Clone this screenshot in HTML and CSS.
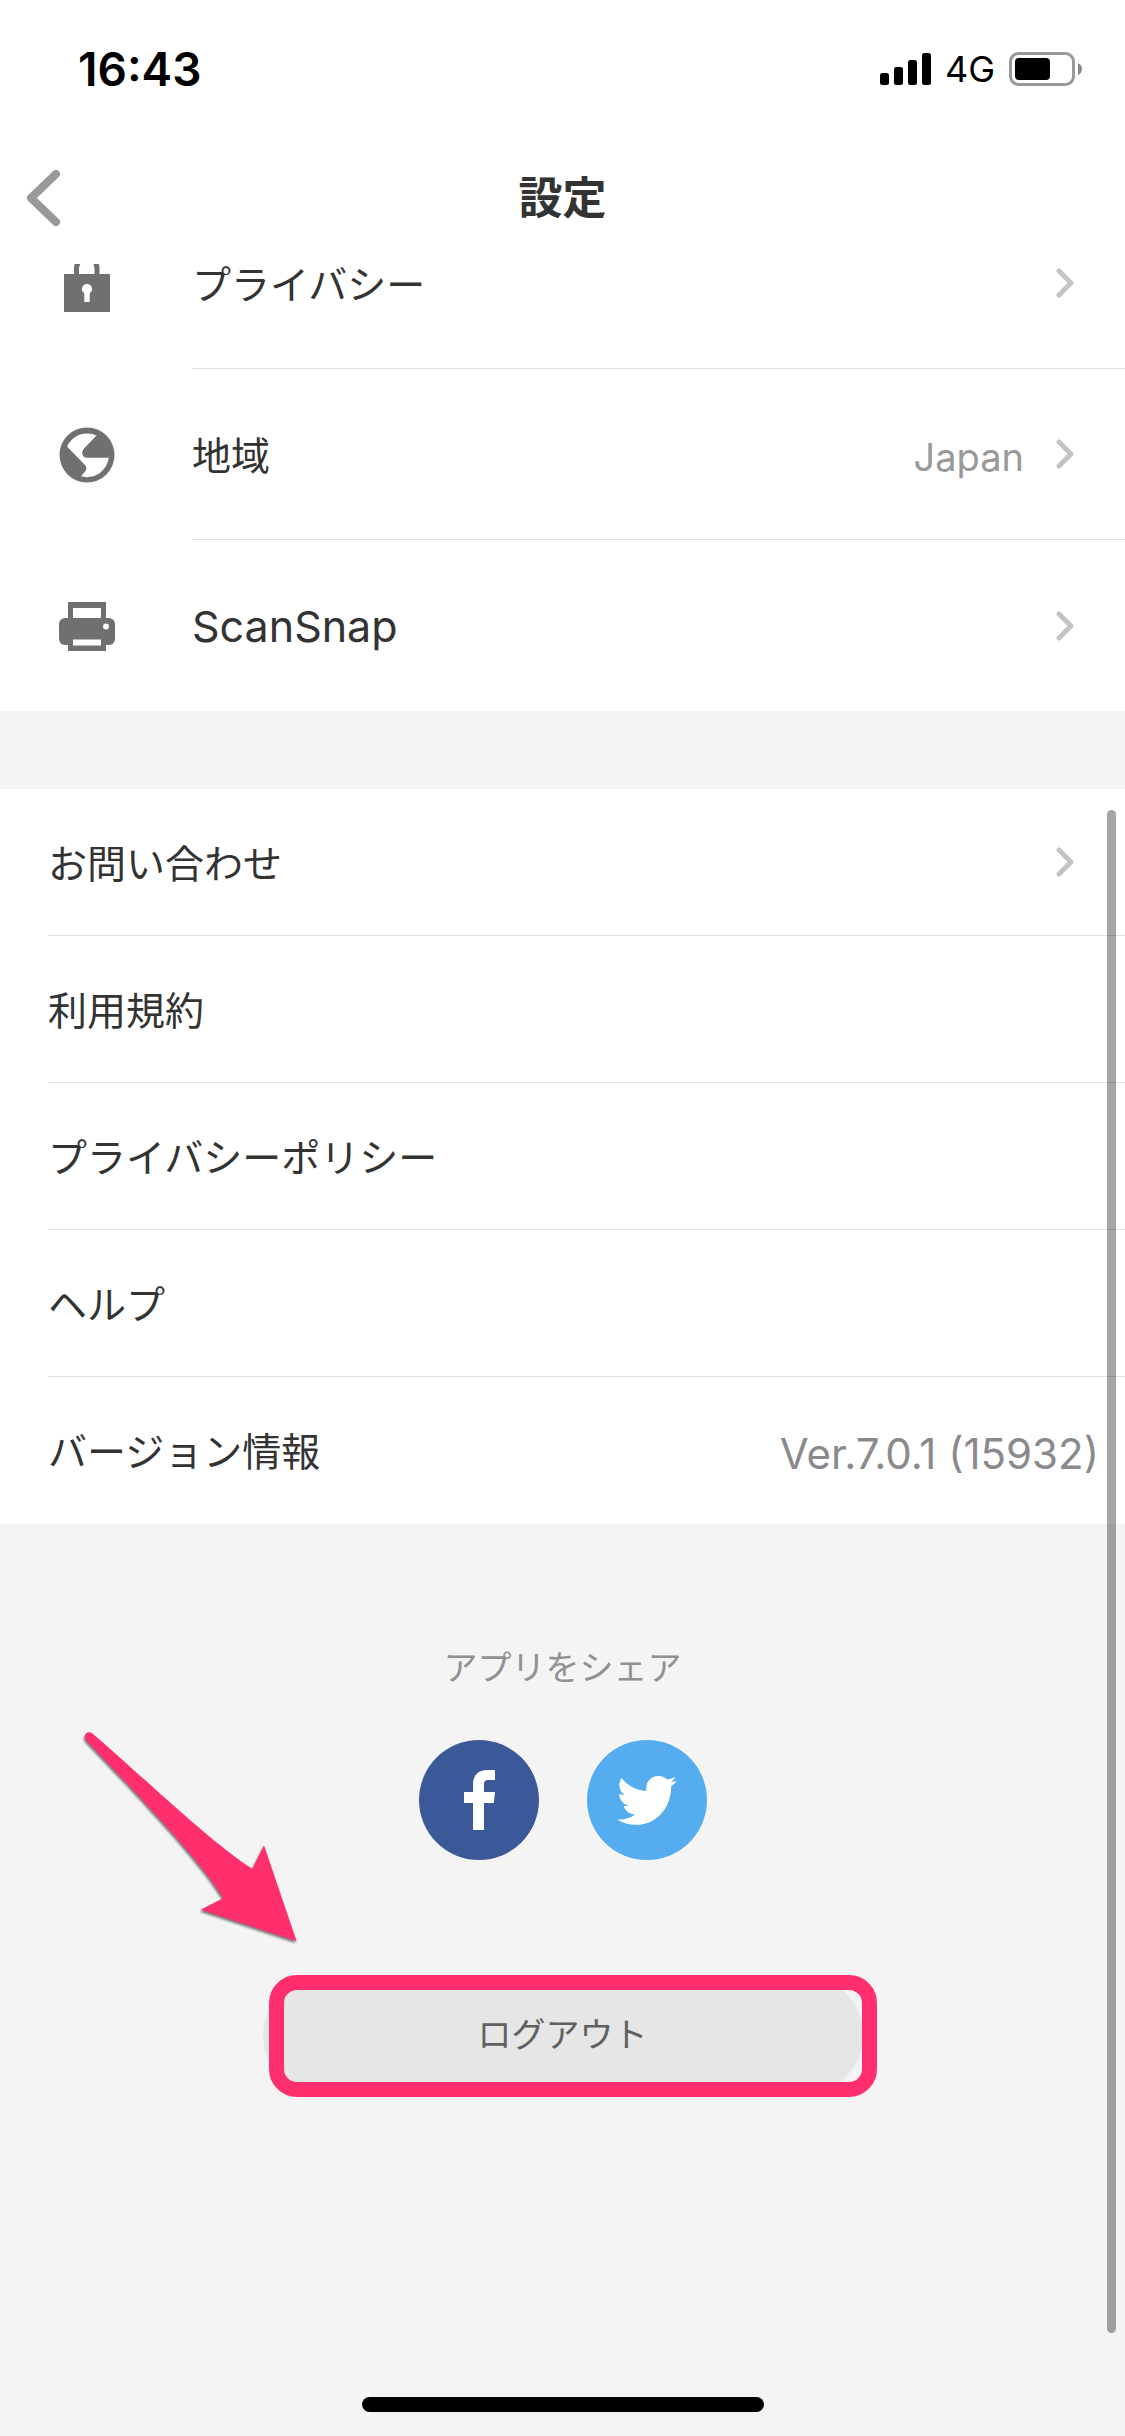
FILE: index.html
```html
<!DOCTYPE html>
<html lang="ja">
<head>
    <meta charset="UTF-8">
    <meta name="viewport" content="width=device-width, initial-scale=1.0">
    <title>設定</title>
    <link rel="stylesheet" href="styles.css">
</head>
<body>

<header class="top">
    <div class="status-bar">
        <span class="time">16:43</span>
        <div class="status-icons">
            <svg class="signal" viewBox="0 0 51 33" aria-hidden="true">
                <rect x="0" y="20" width="9" height="12" rx="2.5"/>
                <rect x="14" y="14" width="9" height="18" rx="2.5"/>
                <rect x="28" y="7" width="9" height="25" rx="2.5"/>
                <rect x="42" y="0" width="9" height="32" rx="2.5"/>
            </svg>
            <span class="network">4G</span>
            <svg class="battery" viewBox="0 0 74 34" aria-hidden="true">
                <rect x="1.5" y="1.5" width="63" height="31" rx="8" fill="none" stroke="#999" stroke-width="3"/>
                <rect x="6" y="6" width="35" height="22" rx="4"/>
                <path d="M69 11q4 2 4 6t-4 6z" fill="#888"/>
            </svg>
        </div>
    </div>
    <div class="nav-bar">
        <button class="back" type="button" aria-label="戻る">
            <svg viewBox="0 0 33 57" aria-hidden="true"><path d="M29 4L4 28L29 52"/></svg>
        </button>
        <h1>設定</h1>
    </div>
</header>

<main>
    <nav class="list icon-list">
        <a class="row" href="#privacy">
            <svg class="icon" viewBox="0 0 66 66" aria-hidden="true">
                <path d="M22.500 24V17C22.500 12 27 7 33 7S43 12 43 17v7" fill="none" stroke="#707070" stroke-width="5"/>
                <path d="M10 23h46v38H10z"/>
                <path d="M33 33a5 5 0 0 0-2.700 9.200V51h5.400v-8.800A5 5 0 0 0 33 33z" fill="#fff"/>
            </svg>
            <span class="row-body"><span class="label">プライバシー</span>
                <svg class="chevron" viewBox="0 0 18 30" aria-hidden="true"><path d="M3 3L15 15L3 27"/></svg></span>
        </a>
        <a class="row" href="#region">
            <svg class="icon" viewBox="0 0 66 66" aria-hidden="true">
                <circle cx="33" cy="33" r="27.500"/>
                <path d="M13 24.500A22 22 0 0 1 42.500 13.500L30.500 26Q27.500 29 28.500 32.500Q29.500 35.700 33 35.700H54.800A22 22 0 0 1 27 54.300L31.500 49Q33.500 46 31 43z" fill="#fff"/>
            </svg>
            <span class="row-body"><span class="label">地域</span><span class="value">Japan</span>
                <svg class="chevron" viewBox="0 0 18 30" aria-hidden="true"><path d="M3 3L15 15L3 27"/></svg></span>
        </a>
        <a class="row" href="#scansnap">
            <svg class="icon" viewBox="0 0 66 66" aria-hidden="true">
                <path d="M14 9h38v16H14zM14 45h38v13H14z"/>
                <rect x="5" y="25" width="56" height="27" rx="6"/>
                <path d="M19 15h28v10H19zM19 46.500h28v6H19z" fill="#fff"/>
                <circle cx="52" cy="33.500" r="3" fill="#fff"/>
            </svg>
            <span class="row-body"><span class="label label-en">ScanSnap</span>
                <svg class="chevron" viewBox="0 0 18 30" aria-hidden="true"><path d="M3 3L15 15L3 27"/></svg></span>
        </a>
    </nav>

    <nav class="list info-list">
        <a class="row" href="#contact"><span class="row-body"><span class="label">お問い合わせ</span>
            <svg class="chevron" viewBox="0 0 18 30" aria-hidden="true"><path d="M3 3L15 15L3 27"/></svg></span></a>
        <a class="row" href="#terms"><span class="row-body"><span class="label">利用規約</span></span></a>
        <a class="row" href="#policy"><span class="row-body"><span class="label">プライバシーポリシー</span></span></a>
        <a class="row" href="#help"><span class="row-body"><span class="label">ヘルプ</span></span></a>
        <div class="row"><span class="row-body version-row"><span class="label">バージョン情報</span><span class="value version">Ver.7.0.1 (15932)</span></span></div>
    </nav>

    <section class="share">
        <h2>アプリをシェア</h2>
        <div class="share-buttons">
            <a class="social facebook" href="#facebook" aria-label="Facebook">
                <svg viewBox="0 0 120 120" aria-hidden="true">
                    <path d="M54 90V63H45V52h9v-7.500C54 35 59.500 30 68 30h8v10h-6.500c-3.500 0-4.500 1.500-4.500 4.500V52h11l-1.200 11H65v27z"/>
                </svg>
            </a>
            <a class="social twitter" href="#twitter" aria-label="Twitter">
                <svg viewBox="0 0 120 120" aria-hidden="true">
                    <path d="M34.500 38C40 45 49 50.500 59.300 51C58 42 64 36 71.500 36c3.500 0 6.500 1.300 8.800 3.600c2.700-.5 5.300-1.500 7.600-2.900c-.5 2.400-2 4.400-4.100 5.700c2.100-.2 4-.7 5.900-1.600c-1.400 2.200-3.200 4.100-5.600 5.500C84.500 66 71 84.800 49 84.800c-7 0-13.500-2-19-5.400c6.500.7 13-1 18.100-5c-5.400-.2-9.900-3.600-11.500-8.500c1.800.3 3.700.3 5.400-.2c-5.700-1.200-9.800-6.200-9.800-12c1.700.9 3.600 1.400 5.500 1.500C32.200 51.500 30.700 44.500 34.500 38z"/>
                </svg>
            </a>
        </div>
        <div class="logout-wrap">
            <button class="logout" type="button">ログアウト</button>
            <span class="highlight"></span>
        </div>
        <svg class="arrow" viewBox="60 90 660 660" aria-hidden="true">
            <path d="M98 101C220 204 460 435 577 506L612 436L710 724L422 629L489 595C430 490 220 270 79 122C66 104 84 89 98 101z"/>
        </svg>
    </section>
</main>

<div class="home-indicator"></div>
<div class="scrollbar"></div>

</body>
</html>
```
FILE: styles.css
```css
* {
    box-sizing: border-box;
}

body {
    margin: 0;
    min-height: 100vh;
    display: flex;
    flex-direction: column;
    position: relative;
    background-color: #f4f4f4;
    color: #333;
    font-family: Inter, "Noto Sans CJK JP", sans-serif;
    font-size: 39px;
}

a {
    color: inherit;
    text-decoration: none;
}

button {
    border: none;
    font-family: inherit;
    cursor: pointer;
}

svg {
    display: block;
    flex: none;
}

/* Header */
.top {
    position: sticky;
    top: 0;
    z-index: 1;
    background-color: #fff;
}

.status-bar {
    height: 132px;
    padding: 6px 42px 0 78px;
    display: flex;
    align-items: center;
    justify-content: space-between;
    color: #000;
}

.time {
    font-size: 46px;
    font-weight: 600;
}

.status-icons {
    display: flex;
    align-items: center;
    gap: 14px;
}

.network {
    font-size: 36px;
}

.signal {
    width: 51px;
    height: 33px;
}

.battery {
    width: 74px;
    height: 34px;
}

.nav-bar {
    height: 132px;
    display: grid;
    grid-template-columns: 1fr auto 1fr;
    align-items: center;
}

.back {
    justify-self: start;
    padding: 20px 27px;
    background: none;
}

.back svg {
    width: 33px;
    height: 57px;
}

.back path {
    fill: none;
    stroke: #999;
    stroke-width: 8;
    stroke-linecap: round;
    stroke-linejoin: round;
}

h1 {
    margin: 0;
    font-size: 44px;
    font-weight: 600;
    line-height: 60px;
}

/* Lists */
.list {
    background-color: #fff;
}

/* first row is partly scrolled under the header */
.icon-list {
    margin-top: -66px;
}

.info-list {
    margin-top: 78px;
}

.row {
    display: flex;
    align-items: center;
    height: 147px;
    padding-left: 48px;
}

.icon-list .row {
    height: 171px;
    padding-left: 54px;
    gap: 72px;
}

.row-body {
    flex: 1;
    align-self: stretch;
    display: flex;
    align-items: center;
    padding-right: 51px;
    border-bottom: 1px solid #e0e0e0;
}

.row:last-child .row-body {
    border-bottom: none;
}

.label {
    flex: 1;
    padding-bottom: 3px;
}

.label-en {
    padding-bottom: 0;
    font-size: 43px;
}

.value {
    margin-right: 32px;
    padding-top: 6px;
    font-size: 38px;
    color: #999;
}

.version-row {
    padding-right: 26px;
}

.version {
    margin-right: 0;
    font-size: 42px;
    color: #8a8a8e;
}

.icon {
    width: 66px;
    height: 66px;
    fill: #707070;
}

.chevron {
    width: 18px;
    height: 30px;
    fill: none;
    stroke: #c4c4c6;
    stroke-width: 5;
    stroke-linecap: round;
    stroke-linejoin: round;
}

/* Share and logout */
.share {
    position: relative;
    padding: 119px 0 60px;
    display: flex;
    flex-direction: column;
    align-items: center;
}

h2 {
    margin: 0 0 47px;
    font-size: 34px;
    font-weight: 400;
    line-height: 50px;
    color: #919191;
}

.share-buttons {
    display: flex;
    gap: 48px;
    margin-bottom: 115px;
}

.social {
    width: 120px;
    height: 120px;
    border-radius: 50%;
    fill: #fff;
}

.facebook {
    background-color: #3b5998;
}

.twitter {
    background-color: #55acee;
}

.logout-wrap {
    position: relative;
    width: 600px;
    max-width: 90%;
}

.logout {
    width: 100%;
    height: 120px;
    padding-bottom: 6px;
    border-radius: 60px;
    background-color: #e6e6e6;
    font-size: 34px;
    color: #606060;
}

.highlight {
    position: absolute;
    top: 0;
    bottom: -2px;
    left: 6px;
    right: -14px;
    border: 15px solid #ff2f6e;
    border-radius: 28px;
    pointer-events: none;
}

.arrow {
    position: absolute;
    top: 206px;
    left: calc(50% - 483px);
    width: 220px;
    height: 220px;
    fill: #ff2f6e;
    filter: drop-shadow(-1px 2px 1px rgba(0, 0, 0, 0.5));
}

.home-indicator {
    width: 402px;
    height: 15px;
    margin: auto auto 24px;
    border-radius: 8px;
    background-color: #000;
}

.scrollbar {
    position: absolute;
    top: 810px;
    bottom: 103px;
    right: 9px;
    width: 9px;
    border-radius: 5px;
    background-color: rgba(0, 0, 0, 0.35);
}
```
